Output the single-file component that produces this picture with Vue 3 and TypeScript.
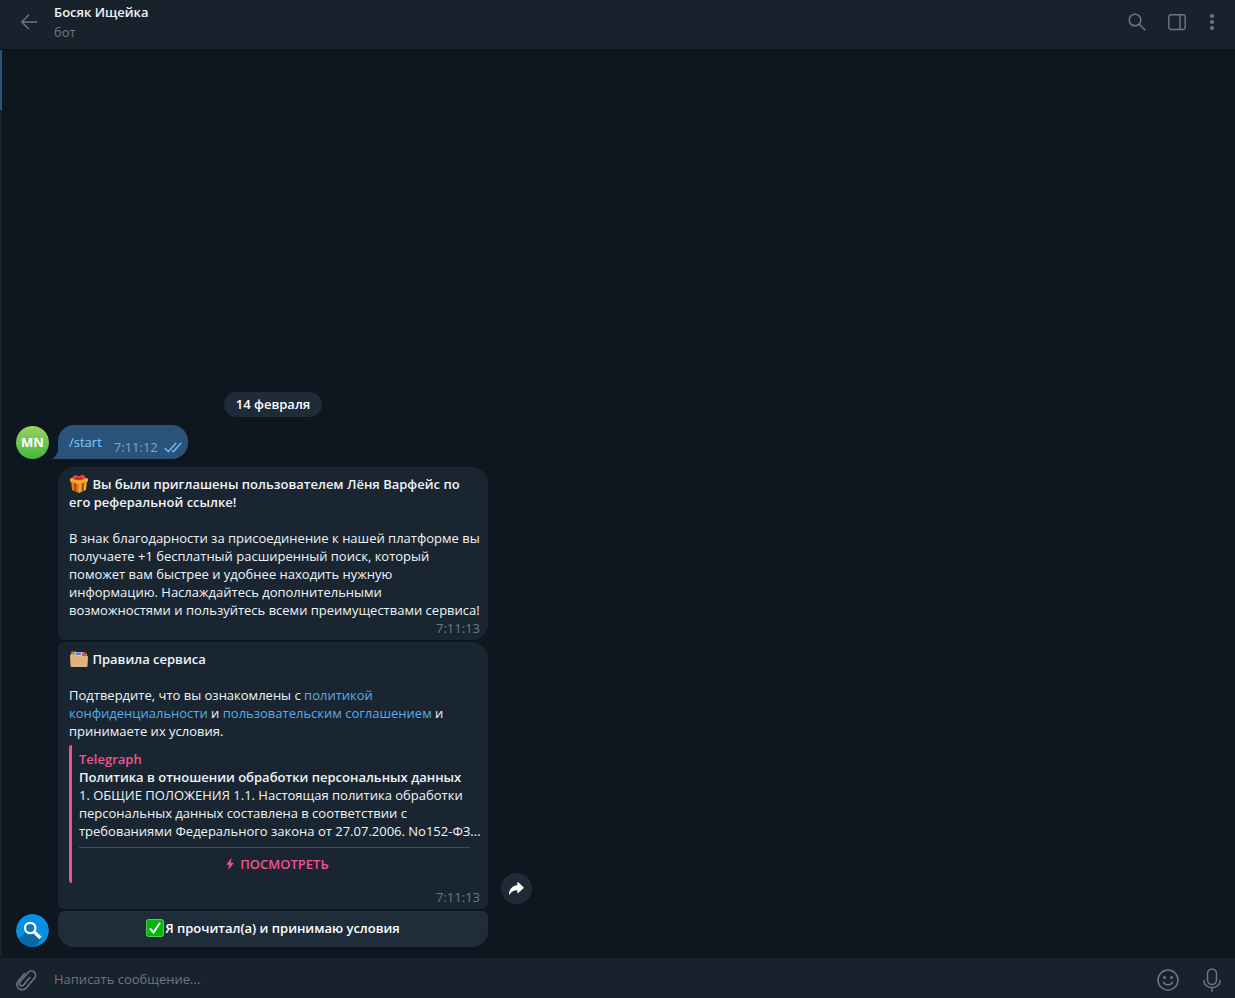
<script setup lang="ts">
import { ref } from 'vue'

interface Preview {
  site: string
  title: string
  description: string
  action: string
}

const chat = { title: 'Босяк Ищейка', status: 'бот' }
const dateLabel = '14 февраля'
const outgoing = { initials: 'MN', command: '/start', time: '7:11:12' }
const invite = {
  title: 'Вы были приглашены пользователем Лёня Варфейс по его реферальной ссылке!',
  body: [
    'В знак благодарности за присоединение к нашей платформе вы',
    'получаете +1 бесплатный расширенный поиск, который',
    'поможет вам быстрее и удобнее находить нужную',
    'информацию. Наслаждайтесь дополнительными',
    'возможностями и пользуйтесь всеми преимуществами сервиса!',
  ].join('\n'),
  time: '7:11:13',
}
const preview: Preview = {
  site: 'Telegraph',
  title: 'Политика в отношении обработки персональных данных',
  description: [
    '1. ОБЩИЕ ПОЛОЖЕНИЯ 1.1. Настоящая политика обработки',
    'персональных данных составлена в соответствии с',
    'требованиями Федерального закона от 27.07.2006. No152-ФЗ...',
  ].join('\n'),
  action: 'ПОСМОТРЕТЬ',
}
const draft = ref('')
</script>

<template>
  <div class="app">
    <header class="header">
      <button class="icon-btn back" type="button" aria-label="Назад">
        <svg width="18" height="18" viewBox="0 0 18 18" fill="none" stroke="currentColor" stroke-width="1.4">
          <path d="M17 9H2M9 1.8 1.8 9 9 16.2" />
        </svg>
      </button>
      <div class="peer">
        <h1 class="peer-name">{{ chat.title }}</h1>
        <p class="peer-status">{{ chat.status }}</p>
      </div>
      <div class="header-actions">
        <button class="icon-btn" type="button" aria-label="Поиск">
          <svg width="18" height="18" viewBox="0 0 18 18" fill="none" stroke="currentColor" stroke-width="1.5">
            <circle cx="7" cy="7" r="5.8" />
            <path d="m11.2 11.2 6 6" />
          </svg>
        </button>
        <button class="icon-btn" type="button" aria-label="Боковая панель">
          <svg width="18" height="18" viewBox="0 0 18 18" fill="none" stroke="currentColor" stroke-width="1.4">
            <rect x="0.8" y="1.7" width="16.4" height="14.8" rx="2.6" />
            <path d="M12 1.7v14.8" />
          </svg>
        </button>
        <button class="icon-btn" type="button" aria-label="Меню">
          <svg width="8" height="18" viewBox="0 0 8 18" fill="currentColor">
            <circle cx="4" cy="3" r="2.1" />
            <circle cx="4" cy="9" r="2.1" />
            <circle cx="4" cy="15" r="2.1" />
          </svg>
        </button>
      </div>
    </header>

    <main class="chat">
      <div class="history">
        <div class="date"><span class="date-pill">{{ dateLabel }}</span></div>

        <div class="row outgoing-row">
          <div class="avatar initials">{{ outgoing.initials }}</div>
          <div class="bubble-out">
            <svg class="tail" width="7" height="14" viewBox="0 0 7 14" fill="currentColor">
              <path d="M7 0C6.600 7 4 11.500 0 14h7z" />
            </svg>
            <a class="command" href="#">{{ outgoing.command }}</a>
            <span class="time">{{ outgoing.time }}</span>
            <svg class="checks" width="18" height="11" viewBox="0 0 18 11" fill="none" stroke="currentColor" stroke-width="1.5">
              <path d="M.8 6.200 4.300 9.600 12.300.8M8 8.200l1.500 1.400L17.300.8" />
            </svg>
          </div>
        </div>

        <div class="row">
          <div class="avatar">
            <svg width="33" height="33" viewBox="0 0 33 33">
              <circle cx="16.500" cy="16.500" r="16.500" fill="#0790df" />
              <path d="M10.200 17.500 2.400 25.200A16.500 16.500 0 0 0 19.500 32.700l6-7.700-6-7z" fill="#0869a8" />
              <circle cx="14.200" cy="14" r="5.200" fill="#1279b8" stroke="#fff" stroke-width="2.200" />
              <path d="m18.200 18 6.300 6" stroke="#fff" stroke-width="3.200" />
            </svg>
          </div>
          <div class="messages">
            <article class="bubble first">
              <p class="strong">
                <svg class="emoji" width="20" height="18" viewBox="0 0 20 18" role="img" aria-label="Подарок">
                  <path d="m2 5 8 2.500V18l-7-3z" fill="#d98218" />
                  <path d="m18 5-8 2.500V18l7-3z" fill="#edab22" />
                  <path d="m1 3.500 8-2 10 2v3L10 9.200 1 6.500z" fill="#f0aa2b" />
                  <path d="m4.800 7.700 2.700.8v8.400l-2.300-1zM12.500 8.400l2.700-.8-.4 8.300-2.300 1z" fill="#b5481c" />
                  <path d="M4 1.500C5.500-.6 8 0 10 1.500 12-.3 15-.6 16 1.500c.7 2.500-2 3.800-6 3.800S3 4 4 1.500z" fill="#f0413c" />
                  <path d="M6 3c1.500-.5 3 0 4 .8 1-.8 2.500-1.300 4-.8-1 1-2 1.400-4 1.400S7 4 6 3z" fill="#9e1e20" />
                </svg>
                {{ invite.title }}
              </p>
              <p class="lines">{{ invite.body }}</p>
              <time class="stamp">{{ invite.time }}</time>
            </article>

            <div class="with-share">
              <article class="bubble second">
                <p class="strong">
                  <svg class="emoji" width="20" height="18" viewBox="0 0 20 18" role="img" aria-label="Папка">
                    <path d="M2 5V3Q2 1.500 3 1.500h4l2 2h9V9H2z" fill="#b98549" />
                    <path d="M6 2h9v5H6z" fill="#c3cbe0" />
                    <path d="M7 2.500h5V5H7z" fill="#5b7fd1" />
                    <path d="M13 2.500h4V6h-4z" fill="#d0543f" />
                    <path d="M1 5.500Q1 4.500 2 4.500h3.500L7.500 6H18q1 0 1 1l-.5 9q0 1-1 1h-15q-1 0-1-1z" fill="#dfb37a" />
                  </svg>
                  Правила сервиса
                </p>
                <p>
                  Подтвердите, что вы ознакомлены с <a href="#">политикой конфиденциальности</a> и
                  <a href="#">пользовательским соглашением</a> и принимаете их условия.
                </p>
                <section class="preview">
                  <p class="preview-site">{{ preview.site }}</p>
                  <p class="strong">{{ preview.title }}</p>
                  <p class="lines">{{ preview.description }}</p>
                  <button class="preview-action" type="button">
                    <svg width="8" height="12" viewBox="0 0 8 12" fill="currentColor">
                      <path d="M5.500 0 .3 6.800h2.900L2.300 12l5.400-7H4.800z" />
                    </svg>
                    {{ preview.action }}
                  </button>
                </section>
                <time class="stamp">{{ invite.time }}</time>
              </article>
              <button class="share" type="button" aria-label="Переслать">
                <svg width="15" height="13" viewBox="0 0 15 13" fill="currentColor">
                  <path d="M8.300.7c0-.6.5-.8.9-.4l5.300 4.900q.5.500 0 1l-5.300 4.900c-.4.400-.9.200-.9-.4V8.200C5 8 2.600 9.500.8 12.200.3 12.900 0 12.600 0 12 .4 7 3.300 3.600 8.300 3.200z" />
                </svg>
              </button>
            </div>

            <button class="accept" type="button">
              <svg width="18" height="18" viewBox="0 0 18 18" role="img" aria-label="Готово">
                <rect x="0.500" y="0.500" width="17" height="17" rx="2" fill="#06b60d" stroke="#4bd34c" />
                <path d="m4 9.500 3.500 4L14 3.800" fill="none" stroke="#fff" stroke-width="2" />
              </svg>
              <span>Я прочитал(а) и принимаю условия</span>
            </button>
          </div>
        </div>
      </div>
    </main>

    <footer class="composer">
      <button class="icon-btn attach" type="button" aria-label="Прикрепить файл">
        <svg width="22" height="24" viewBox="0 0 20 22" fill="none" stroke="currentColor" stroke-width="1.400" stroke-linecap="round">
          <path transform="translate(10 11) rotate(40)" d="M-4.800-3.500V5.500a4.800 4.800 0 0 0 9.600 0V-6.500a3.900 3.900 0 0 0-7.800 0V5a2.100 2.100 0 0 0 4.200 0V-4" />
        </svg>
      </button>
      <input v-model="draft" class="field" type="text" placeholder="Написать сообщение..." aria-label="Написать сообщение" />
      <button class="icon-btn" type="button" aria-label="Эмодзи">
        <svg width="22" height="22" viewBox="0 0 22 22" fill="none" stroke="currentColor" stroke-width="1.500">
          <circle cx="11" cy="11" r="10" />
          <path d="M6.500 13.200c1.500 3.300 7.500 3.300 9 0" stroke-linecap="round" />
          <circle cx="7.500" cy="8.500" r="1.500" fill="currentColor" stroke="none" />
          <circle cx="14.500" cy="8.500" r="1.500" fill="currentColor" stroke="none" />
        </svg>
      </button>
      <button class="icon-btn" type="button" aria-label="Голосовое сообщение">
        <svg width="18" height="24" viewBox="0 0 18 24" fill="none" stroke="currentColor" stroke-width="1.500">
          <rect x="4.500" y="1" width="9" height="15.500" rx="4.500" />
          <path d="M.8 12c0 10.300 16.400 10.300 16.400 0M9 19.700V24" />
        </svg>
      </button>
    </footer>
  </div>
</template>

<style>
body {
  margin: 0;
  background: #0e1620;
}
</style>

<style scoped>
.app {
  display: flex;
  flex-direction: column;
  min-height: 100vh;
  background: #0e1620;
  color: #f1f4f6;
  font: 13px/18px "Open Sans", "Noto Sans", sans-serif;
}

h1,
p {
  margin: 0;
  font-size: 13px;
  line-height: 18px;
}

button {
  padding: 0;
  border: 0;
  background: none;
  color: inherit;
  font: inherit;
  cursor: pointer;
}

svg {
  display: block;
}

a {
  color: #5cabe8;
  text-decoration: none;
}

.icon-btn {
  display: flex;
  color: #6d7780;
}

.header {
  display: flex;
  align-items: center;
  height: 50px;
  padding: 0 19px 5px 20px;
  box-sizing: border-box;
  background: #18222c;
  border-bottom: 1px solid #0a121b;
}

.back {
  width: 34px;
}

.peer {
  flex: 1;
}

.peer-name {
  font-weight: 600;
  line-height: 20px;
}

.peer-status {
  color: #6d7984;
  line-height: 20px;
}

.header-actions {
  display: flex;
  gap: 22px;
}

.chat {
  flex: 1;
  display: flex;
  align-items: flex-end;
  padding: 10px 14px;
  border-left: 2px solid;
  border-image: linear-gradient(#245580 61px, #18222c 61px) 1;
}

.history {
  flex: 1;
  min-width: 0;
}

.date {
  display: flex;
  justify-content: center;
  max-width: 430px;
  margin-left: 42px;
}

.date-pill {
  padding: 3px 12px 4px;
  border-radius: 13px;
  background: #1e2c38;
  color: #fff;
  font-weight: 600;
}

.row {
  display: flex;
  align-items: flex-end;
  gap: 9px;
}

.outgoing-row {
  margin: 8px 0;
}

.avatar {
  flex: none;
  width: 33px;
  height: 33px;
  border-radius: 50%;
  overflow: hidden;
}

.initials {
  background: linear-gradient(#9ad164, #43b83b);
  color: #fff;
  font-weight: 700;
  line-height: 33px;
  text-align: center;
}

.bubble-out {
  position: relative;
  display: flex;
  align-items: flex-end;
  height: 34px;
  padding: 0 6px 3px 11px;
  box-sizing: border-box;
  border-radius: 16px 16px 16px 0;
  background: #2b5278;
}

.tail {
  position: absolute;
  left: -6px;
  bottom: 0;
  color: #2b5278;
}

.command {
  margin: 0 12px 5px 0;
  color: #83caff;
}

.time {
  color: #7da8d3;
}

.checks {
  margin: 0 0 3px 6px;
  color: #67b7f2;
}

.messages {
  display: flex;
  flex-direction: column;
  gap: 2px;
  flex: 1;
  min-width: 0;
  max-width: 430px;
}

.bubble {
  flex: none;
  width: 100%;
  padding: 8px 11px 3px;
  box-sizing: border-box;
  background: #192631;
}

.first {
  border-radius: 16px 16px 16px 6px;
}

.second {
  border-radius: 6px 16px 6px 6px;
}

.strong {
  font-weight: 600;
}

.lines {
  white-space: pre;
}

.emoji {
  display: inline-block;
  vertical-align: text-bottom;
}

.bubble > .strong {
  margin-bottom: 18px;
}

.stamp {
  display: block;
  margin-right: -3px;
  color: #6c7b88;
  text-align: right;
}

.preview {
  margin: 5px 0;
  padding: 5px 7px 0;
  border-left: 3px solid #f5518f;
  border-radius: 3px;
}

.preview-site {
  color: #f5518f;
  font-weight: 600;
}

.preview-action {
  display: flex;
  align-items: center;
  justify-content: center;
  gap: 6px;
  width: 100%;
  height: 36px;
  margin-top: 7px;
  padding: 0 0 4px 6px;
  border-top: 1px solid #733652;
  color: #f5518f;
  font-weight: 600;
}

.with-share {
  display: flex;
  align-items: flex-end;
}

.share {
  flex: none;
  display: grid;
  place-items: center;
  width: 31px;
  height: 31px;
  margin: 0 -44px 5px 13px;
  border-radius: 50%;
  background: #1e2b37;
  color: #fff;
}

.accept {
  display: flex;
  align-items: center;
  justify-content: center;
  gap: 1px;
  height: 36px;
  padding-bottom: 2px;
  border-radius: 6px 6px 16px 16px;
  background: #1f2d3a;
  color: #fff;
  font-weight: 600;
}

.composer {
  display: flex;
  align-items: center;
  gap: 24px;
  height: 41px;
  padding: 3px 14px 0 15px;
  box-sizing: border-box;
  background: #18222c;
  border-top: 1px solid #0a121b;
}

.attach {
  margin-right: -7px;
}

.field {
  flex: 1;
  min-width: 0;
  height: 20px;
  padding: 0 0 2px;
  box-sizing: border-box;
  border: 0;
  outline: 0;
  background: none;
  color: #f1f4f6;
  font: inherit;
}

.field::placeholder {
  color: #6d7780;
  opacity: 1;
}
</style>
